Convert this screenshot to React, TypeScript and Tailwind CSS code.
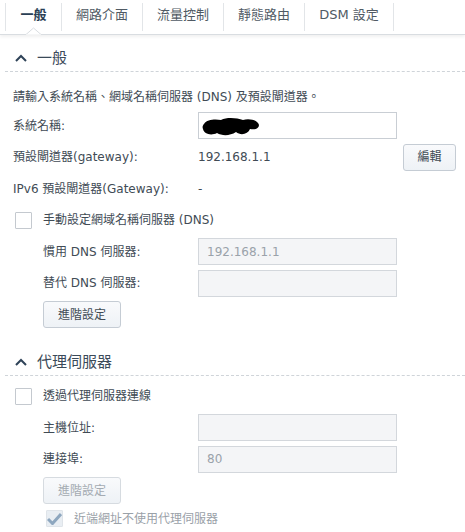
import type { ReactNode } from 'react';

// --- Sub-Components ---

const tabs = [
  { label: '一般', width: 'w-[57px]', active: true },
  { label: '網路介面', width: 'w-[81px]' },
  { label: '流量控制', width: 'w-[81px]' },
  { label: '靜態路由', width: 'w-[81px]' },
  { label: 'DSM 設定', width: 'w-[89px]' },
];

function TabBar() {
  return (
    <div className="relative flex h-[35px] items-stretch border-b border-[#d9dde1] bg-white pl-[5px] shadow-[0_2px_3px_rgba(0,0,0,0.06)]">
      {tabs.map((tab) => (
        <div
          key={tab.label}
          className={`${tab.width} my-[3px] flex items-center justify-center border-r border-[#e2e5e8] text-[13px] first:border-l ${
            tab.active ? 'font-semibold text-[#2a3f55]' : 'text-[#505a64]'
          }`}
        >
          <span className="mt-[-4px]">{tab.label}</span>
        </div>
      ))}
      {/* active tab notch */}
      <svg className="absolute bottom-[-1px] left-[26px]" width="15" height="8" viewBox="0 0 15 8">
        <path d="M0 7.5 L7.5 1 L15 7.5" fill="white" stroke="#d9dde1" strokeWidth="1" />
        <rect x="0" y="7.5" width="15" height="1" fill="white" />
      </svg>
    </div>
  );
}

function SectionHeader({ title, className }: { title: string; className: string }) {
  return (
    <div className={`${className} flex items-end border-b border-dashed border-[#cfd4d9] pb-[3px] pl-[10px]`}>
      <svg width="12" height="8" viewBox="0 0 12 8" className="mb-[6px] mr-[10px]">
        <path d="M1 7 L6 2 L11 7" fill="none" stroke="#2f4358" strokeWidth="2" />
      </svg>
      <span className="text-[15px] leading-[20px] text-[#3b4a59]">{title}</span>
    </div>
  );
}

function Row({ label, indent, children }: { label: string; indent?: boolean; children?: ReactNode }) {
  return (
    <div className="flex h-[31.5px] items-center">
      <div className={`${indent ? 'pl-[30px]' : ''} w-[185px] shrink-0`}>{label}</div>
      {children}
    </div>
  );
}

function TextBox({ value, disabled, children }: { value?: string; disabled?: boolean; children?: ReactNode }) {
  return (
    <div
      className={`flex h-[27px] w-[199px] items-center border px-[8px] ${
        disabled ? 'border-[#d3d7dc] bg-[#f4f5f7] text-[#9aa2aa]' : 'border-[#c9ced4] bg-white'
      }`}
    >
      {value}
      {children}
    </div>
  );
}

function Button({ label, disabled, className }: { label: string; disabled?: boolean; className: string }) {
  return (
    <div
      className={`${className} flex h-[27px] items-center justify-center rounded-[3px] border bg-gradient-to-b from-[#f9fafc] to-[#eef2f6] ${
        disabled ? 'border-[#d6dbe0] text-[#a4abb2]' : 'border-[#c5ccd4] text-[#414b55]'
      }`}
    >
      {label}
    </div>
  );
}

function Checkbox({ label, checked, disabled, indent }: { label: string; checked?: boolean; disabled?: boolean; indent?: boolean }) {
  return (
    <div className={`flex items-center ${indent ? 'pl-[33px]' : 'pl-[2px]'}`}>
      <div
        className={`mr-[11px] flex h-[17px] w-[17px] items-center justify-center rounded-[1px] border ${
          checked ? 'border-[#dfe4e9] bg-[#e9eef3]' : 'border-[#c4c9cf] bg-white'
        }`}
      >
        {checked && (
          <svg width="15" height="13" viewBox="0 0 15 13">
            <path d="M1 7 L5.5 11.5 L14 2" fill="none" stroke="#8ea7bf" strokeWidth="3" />
          </svg>
        )}
      </div>
      <span className={disabled ? 'text-[#9aa1a8]' : ''}>{label}</span>
    </div>
  );
}

// --- Main Component ---

export default function App() {
  return (
    <div className="h-[532px] w-[465px] overflow-hidden bg-white font-['DejaVu_Sans','Noto_Sans_CJK_TC',sans-serif] text-[12px] text-[#414b55]">
      <TabBar />

      <SectionHeader title="一般" className="ml-[5px] h-[37px]" />

      <div className="pl-[13px]">
        <div className="flex h-[38px] items-end pb-[4px]">請輸入系統名稱、網域名稱伺服器 (DNS) 及預設閘道器。</div>

        <Row label="系統名稱:">
          <TextBox>
            {/* redaction scribble */}
            <svg width="58" height="20" viewBox="0 0 58 20" className="ml-[-5px] mt-[2px]">
              <path
                d="M2 7 C5 2 14 2 19 3 C25 0 35 1 41 3 C47 1 56 3 57 8 C57 12 52 13 48 12 C46 17 39 19 34 15 C28 19 20 19 15 16 C9 19 2 17 1 12 C0 10 1 8 2 7 Z"
                fill="#000"
              />
            </svg>
          </TextBox>
        </Row>
        <Row label="預設閘道器(gateway):">
          <span className="w-[205px]">192.168.1.1</span>
          <Button label="編輯" className="w-[53px]" />
        </Row>
        <Row label="IPv6 預設閘道器(Gateway):">
          <span>-</span>
        </Row>
        <div className="flex h-[31.5px] items-center">
          <Checkbox label="手動設定網域名稱伺服器 (DNS)" />
        </div>
        <Row label="慣用 DNS 伺服器:" indent>
          <TextBox value="192.168.1.1" disabled />
        </Row>
        <Row label="替代 DNS 伺服器:" indent>
          <TextBox disabled />
        </Row>
        <div className="flex h-[31.5px] items-center pl-[30px]">
          <Button label="進階設定" className="w-[78px]" />
        </div>
      </div>

      <SectionHeader title="代理伺服器" className="ml-[5px] h-[45px]" />

      <div className="pl-[13px] pt-[5px]">
        <div className="flex h-[31.5px] items-center">
          <Checkbox label="透過代理伺服器連線" />
        </div>
        <Row label="主機位址:" indent>
          <TextBox disabled />
        </Row>
        <Row label="連接埠:" indent>
          <TextBox value="80" disabled />
        </Row>
        <div className="flex h-[31.5px] items-center pl-[30px]">
          <Button label="進階設定" disabled className="w-[78px]" />
        </div>
        <div className="flex h-[24px] items-center">
          <Checkbox label="近端網址不使用代理伺服器" checked disabled indent />
        </div>
      </div>
    </div>
  );
}
